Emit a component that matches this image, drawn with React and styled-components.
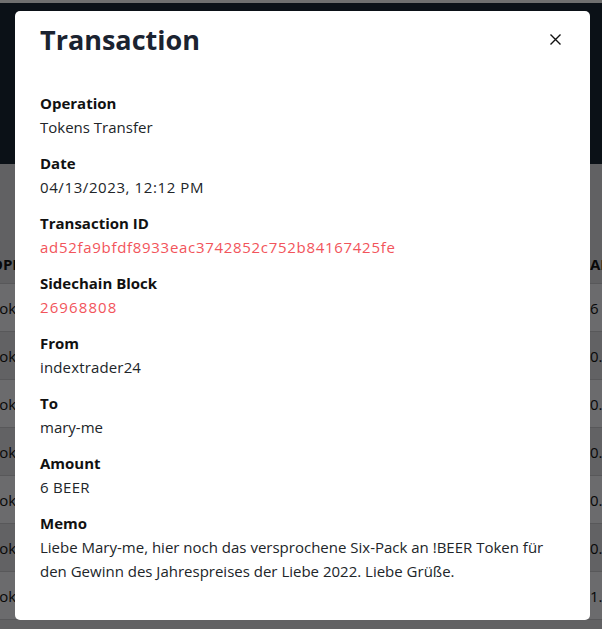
import React from 'react';
import styled, { createGlobalStyle } from 'styled-components';

const GlobalStyle = createGlobalStyle`
  html, body {
    margin: 0;
    padding: 0;
    overflow: hidden;
  }
  body {
    font-family: "Open Sans", "Noto Sans", sans-serif;
    color: #212529;
    background: #c2c2c6;
  }
`;

const Page = styled.div`
  width: 602px;
  height: 629px;
  overflow: hidden;
  display: flex;
  flex-direction: column;
`;

const TopStrip = styled.div`
  height: 3px;
  background: #dedede;
`;

const Navbar = styled.div`
  height: 161px;
  background: #16232f;
`;

const TableArea = styled.div`
  flex: 1;
  background: #c2c2c6;
  padding-top: 81px;
  overflow: hidden;
`;

const Row = styled.div`
  display: grid;
  grid-template-columns: 599px 1fr;
  align-items: center;
  height: ${(p) => (p.$head ? 38 : 47)}px;
  margin-left: -9px;
  background: ${(p) => (p.$head ? '#c2c2c6' : p.$odd ? '#d6d6da' : '#c4c4c8')};
  border-bottom: 1px solid #b0b0b4;
  font-size: 15px;
  font-weight: ${(p) => (p.$head ? 700 : 400)};
  color: #111;
`;

const Cell = styled.span`
  white-space: nowrap;
  overflow: hidden;
`;

const Backdrop = styled.div`
  position: fixed;
  inset: 0;
  background: rgba(0, 0, 0, 0.5);
  display: flex;
  align-items: flex-start;
  padding: 11px 0 0 15px;
`;

const Modal = styled.div`
  width: 575px;
  height: 609px;
  box-sizing: border-box;
  background: #fff;
  border-radius: 5px;
  padding: 0 25px;
`;

const Header = styled.div`
  display: flex;
  justify-content: space-between;
  align-items: center;
  height: 56px;
  margin-bottom: 24px;
`;

const Title = styled.h2`
  margin: 0;
  font-size: 27px;
  font-weight: 700;
  color: #1b2330;
  line-height: 1;
`;

const CloseButton = styled.button`
  border: none;
  background: transparent;
  padding: 0;
  margin-right: 3px;
  width: 13px;
  height: 13px;
  display: flex;
  cursor: pointer;
`;

const Field = styled.div`
  margin-bottom: 12px;
  font-size: 15px;
  line-height: 24px;
`;

const Label = styled.div`
  font-weight: 700;
  color: #111;
`;

const Value = styled.div`
  color: ${(p) => (p.$link ? '#f2545b' : '#212529')};
  letter-spacing: ${(p) => p.$spacing || 0}px;
`;

const rows = ['6', '0.05', '0.1', '0.05', '0.02', '0.1', '1.5'];

const fields = [
  { label: 'Operation', value: 'Tokens Transfer' },
  { label: 'Date', value: '04/13/2023, 12:12 PM', spacing: 0.6 },
  { label: 'Transaction ID', value: 'ad52fa9bfdf8933eac3742852c752b84167425fe', link: true, spacing: 0.7 },
  { label: 'Sidechain Block', value: '26968808', link: true, spacing: 1.1 },
  { label: 'From', value: 'indextrader24', spacing: 0.15 },
  { label: 'To', value: 'mary-me' },
  { label: 'Amount', value: '6 BEER', spacing: 0.3 },
  {
    label: 'Memo',
    value: 'Liebe Mary-me, hier noch das versprochene Six-Pack an !BEER Token für den Gewinn des Jahrespreises der Liebe 2022. Liebe Grüße.',
  },
];

export default function App() {
  return (
    <>
      <GlobalStyle />
      <Page>
        <TopStrip />
        <Navbar />
        <TableArea>
          <Row $head>
            <Cell>OPERATION</Cell>
            <Cell>AMOUNT</Cell>
          </Row>
          {rows.map((r, i) => (
            <Row key={i} $odd={i % 2 === 0}>
              <Cell>Tokens Transfer</Cell>
              <Cell>{r}</Cell>
            </Row>
          ))}
        </TableArea>
      </Page>
      <Backdrop>
        <Modal>
          <Header>
            <Title>Transaction</Title>
            <CloseButton aria-label="Close">
              <svg width="13" height="13" viewBox="0 0 13 13">
                <path d="M1.5 1.5L11.5 11.5M11.5 1.5L1.5 11.5" stroke="#111" strokeWidth="1.4" />
              </svg>
            </CloseButton>
          </Header>
          {fields.map((f) => (
            <Field key={f.label}>
              <Label>{f.label}</Label>
              <Value $link={f.link} $spacing={f.spacing}>{f.value}</Value>
            </Field>
          ))}
        </Modal>
      </Backdrop>
    </>
  );
}
